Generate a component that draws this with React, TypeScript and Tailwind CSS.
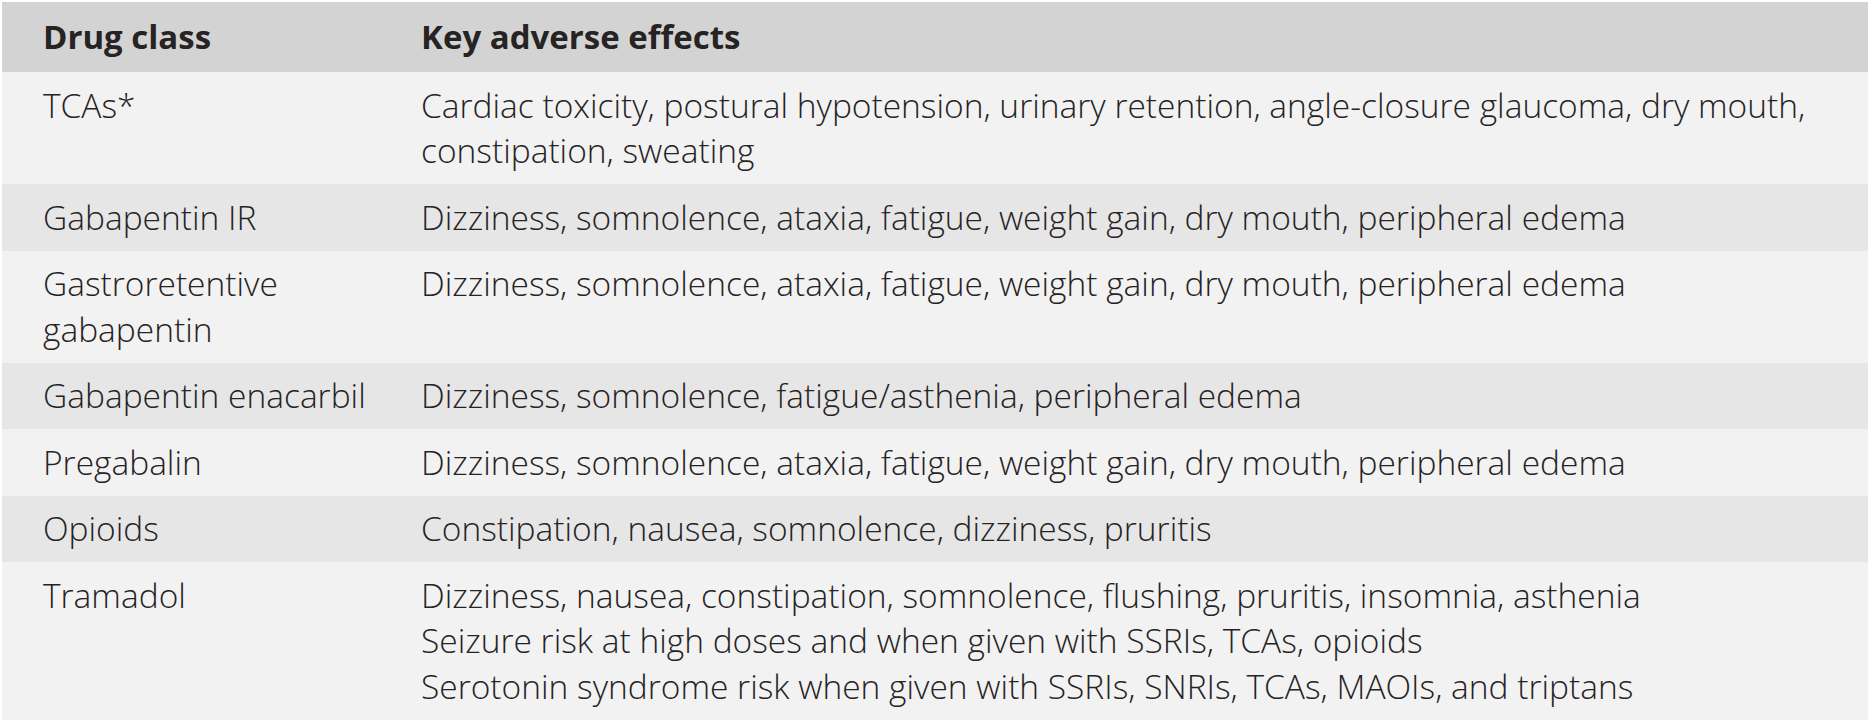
const rows: { drug: string[]; effects: string[] }[] = [
  {
    drug: ["TCAs*"],
    effects: [
      "Cardiac toxicity, postural hypotension, urinary retention, angle-closure glaucoma, dry mouth,",
      "constipation, sweating",
    ],
  },
  {
    drug: ["Gabapentin IR"],
    effects: ["Dizziness, somnolence, ataxia, fatigue, weight gain, dry mouth, peripheral edema"],
  },
  {
    drug: ["Gastroretentive", "gabapentin"],
    effects: ["Dizziness, somnolence, ataxia, fatigue, weight gain, dry mouth, peripheral edema"],
  },
  {
    drug: ["Gabapentin enacarbil"],
    effects: ["Dizziness, somnolence, fatigue/asthenia, peripheral edema"],
  },
  {
    drug: ["Pregabalin"],
    effects: ["Dizziness, somnolence, ataxia, fatigue, weight gain, dry mouth, peripheral edema"],
  },
  {
    drug: ["Opioids"],
    effects: ["Constipation, nausea, somnolence, dizziness, pruritis"],
  },
  {
    drug: ["Tramadol"],
    effects: [
      "Dizziness, nausea, constipation, somnolence, flushing, pruritis, insomnia, asthenia",
      "Seizure risk at high doses and when given with SSRIs, TCAs, opioids",
      "Serotonin syndrome risk when given with SSRIs, SNRIs, TCAs, MAOIs, and triptans",
    ],
  },
];

export default function App() {
  return (
    <div
      className="w-[1870px] h-[723px] bg-white p-[2px] text-[#262324]"
      style={{ fontFamily: '"Open Sans", "Noto Sans", sans-serif' }}
    >
      <div className="w-[1866px]">
        <div className="flex h-[70px] items-center bg-[#d3d3d3] text-[33px] font-bold">
          <div className="w-[419px] shrink-0 pl-[41px]">Drug class</div>
          <div>Key adverse effects</div>
        </div>
        {rows.map((r, i) => (
          <div
            key={i}
            className={`flex py-[10.5px] text-[33.5px] font-light leading-[45.5px] ${
              i % 2 === 0 ? "bg-[#f2f2f2]" : "bg-[#e6e6e6]"
            }`}
          >
            <div className="w-[419px] shrink-0 pl-[41px]">
              {r.drug.map((l, j) => (
                <div key={j} className="whitespace-nowrap">
                  {l}
                </div>
              ))}
            </div>
            <div>
              {r.effects.map((l, j) => (
                <div key={j} className="whitespace-nowrap">
                  {l}
                </div>
              ))}
            </div>
          </div>
        ))}
      </div>
    </div>
  );
}
